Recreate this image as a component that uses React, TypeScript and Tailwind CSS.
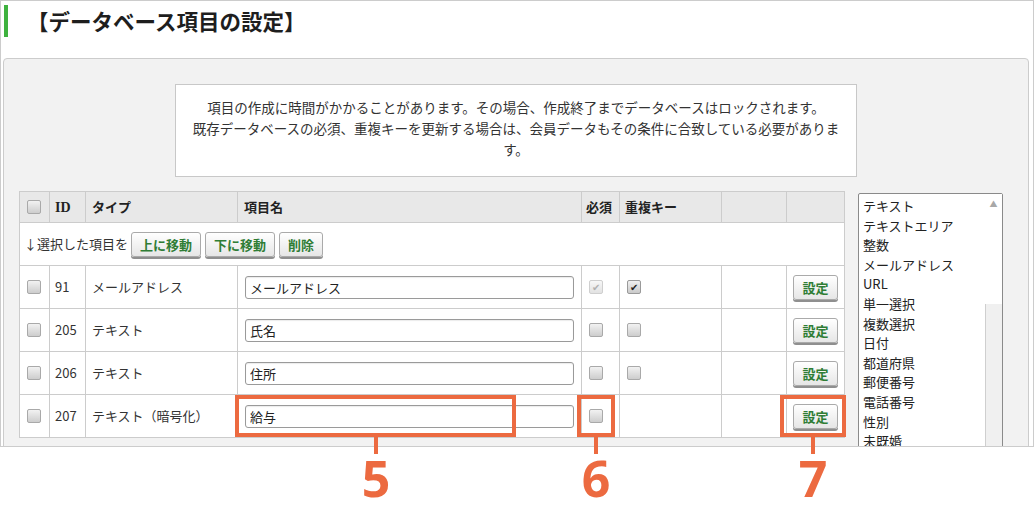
import React from "react";

const jp = { fontFamily: '"Noto Sans CJK JP", "Noto Sans", sans-serif' };

type Row = {
  id: number;
  type: string;
  name: string;
  required: "checked-disabled" | "off";
  unique: "checked" | "off" | "none";
};

const rows: Row[] = [
  { id: 91, type: "メールアドレス", name: "メールアドレス", required: "checked-disabled", unique: "checked" },
  { id: 205, type: "テキスト", name: "氏名", required: "off", unique: "off" },
  { id: 206, type: "テキスト", name: "住所", required: "off", unique: "off" },
  { id: 207, type: "テキスト（暗号化）", name: "給与", required: "off", unique: "none" },
];

const typeOptions = [
  "テキスト",
  "テキストエリア",
  "整数",
  "メールアドレス",
  "URL",
  "単一選択",
  "複数選択",
  "日付",
  "都道府県",
  "郵便番号",
  "電話番号",
  "性別",
  "未既婚",
];

function Check({ state = "off" }: { state?: "off" | "checked" | "checked-disabled" }) {
  if (state === "checked-disabled") {
    return (
      <span className="flex h-[14px] w-[14px] items-center justify-center rounded-[2px] border border-[#cfcfcf] bg-gradient-to-b from-[#f7f7f7] to-[#e2e2e2] text-[10px] leading-none text-[#b0b0b0]">
        ✔
      </span>
    );
  }
  if (state === "checked") {
    return (
      <span className="flex h-[14px] w-[14px] items-center justify-center rounded-[2px] border border-[#9a9a9a] bg-gradient-to-b from-[#f0f0f0] to-[#cacaca] text-[10px] leading-none text-[#222]">
        ✔
      </span>
    );
  }
  return (
    <span className="block h-[14px] w-[14px] rounded-[2px] border border-[#a9a9a9] bg-gradient-to-b from-[#f2f2f2] to-[#cdcdcd]" />
  );
}

function Btn({ children }: { children: React.ReactNode }) {
  return (
    <button
      type="button"
      className="h-[25px] rounded-[3px] border border-[#aaaaaa] bg-gradient-to-b from-white to-[#e6e6e6] px-[8px] text-[13px] font-bold leading-none text-[#2f7d35] shadow-[0_2px_0_#8f8f8f]"
    >
      {children}
    </button>
  );
}

export default function App() {
  return (
    <div className="relative h-[506px] w-[1034px] overflow-hidden bg-white text-[#333]" style={jp}>
      <div className="h-[447px] overflow-hidden border border-[#cccccc]">
        <div className="mt-[4px] flex items-center">
          <span className="ml-[3px] h-[32px] w-[4px] bg-[#3fb23f]" />
          <h1 className="ml-[19px] text-[21.5px] font-bold leading-none text-[#1e1e1e]">【データベース項目の設定】</h1>
        </div>

        <div className="ml-[2px] mr-[4px] mt-[21px] h-[600px] rounded-[4px] border border-[#cccccc] bg-[#f2f2f2] pt-[25px]">
          <div className="mx-auto w-[682px] border border-[#c8c8c8] bg-white px-[12px] pb-[16px] pt-[12px] text-center text-[13.5px] leading-[21px] text-[#333]">
            項目の作成に時間がかかることがあります。その場合、作成終了までデータベースはロックされます。
            <br />
            既存データベースの必須、重複キーを更新する場合は、会員データもその条件に合致している必要があります。
          </div>

          <div className="mt-[14px] flex items-start gap-[13px] pl-[15px]">
            <table className="w-[825px] table-fixed border-collapse bg-white text-[13px] text-[#333]">
              <colgroup>
                <col className="w-[30px]" />
                <col className="w-[36px]" />
                <col className="w-[152px]" />
                <col className="w-[344px]" />
                <col className="w-[38px]" />
                <col className="w-[102px]" />
                <col className="w-[65px]" />
                <col className="w-[58px]" />
              </colgroup>
              <thead>
                <tr className="h-[31px] bg-[#e8e8e8] text-left font-bold text-[#222]">
                  <th className="border border-[#cccccc] pl-[7px]">
                    <Check />
                  </th>
                  <th className="border border-[#cccccc] pl-[5px] text-[14px] font-bold" style={{ fontFamily: '"Liberation Serif", serif' }}>
                    ID
                  </th>
                  <th className="border border-[#cccccc] pl-[6px]">タイプ</th>
                  <th className="border border-[#cccccc] pl-[6px]">項目名</th>
                  <th className="border border-[#cccccc] pl-[4px]">必須</th>
                  <th className="border border-[#cccccc] pl-[5px]">重複キー</th>
                  <th className="border border-[#cccccc]" />
                  <th className="border border-[#cccccc]" />
                </tr>
              </thead>
              <tbody>
                <tr className="h-[43px]">
                  <td colSpan={8} className="border border-[#cccccc] pl-[4px]">
                    <div className="flex items-center gap-[4px]">
                      <span className="mr-[-1px]">↓選択した項目を</span>
                      <Btn>上に移動</Btn>
                      <Btn>下に移動</Btn>
                      <Btn>削除</Btn>
                    </div>
                  </td>
                </tr>
                {rows.map((r) => (
                  <tr key={r.id} className="h-[43px]">
                    <td className="border border-[#cccccc] pl-[7px]">
                      <Check />
                    </td>
                    <td className="border border-[#cccccc] pl-[5px]">{r.id}</td>
                    <td className="border border-[#cccccc] pl-[6px]">{r.type}</td>
                    <td className="border border-[#cccccc] px-[7px]">
                      <input
                        readOnly
                        value={r.name}
                        className="h-[23px] w-full rounded-[3px] border border-[#9a9a9a] bg-white px-[4px] text-[13px] text-[#222] shadow-[inset_0_1px_1px_rgba(0,0,0,0.08)] outline-none"
                        style={jp}
                      />
                    </td>
                    <td className="border border-[#cccccc] pl-[7px]">
                      <Check state={r.required} />
                    </td>
                    <td className="border border-[#cccccc] pl-[7px]">
                      {r.unique !== "none" && <Check state={r.unique} />}
                    </td>
                    <td className="border border-[#cccccc]" />
                    <td className="border border-[#cccccc] text-center">
                      <Btn>設定</Btn>
                    </td>
                  </tr>
                ))}
              </tbody>
            </table>

            <div className="mt-[2px] flex h-[300px] w-[145px] rounded-[2px] border border-[#8a8a8a] bg-white">
              <ul className="flex-1 pl-[4px] pt-[2px] text-[13px] leading-[19.6px] text-[#222]">
                {typeOptions.map((o) => (
                  <li key={o}>{o}</li>
                ))}
              </ul>
              <div className="flex w-[17px] flex-col">
                <div className="flex h-[110px] justify-center bg-white pt-[6px] text-[8px] leading-none text-[#a8a8a8]">▲</div>
                <div className="flex-1 border-l border-[#cfcfcf] bg-[#f0f0f0]" />
              </div>
            </div>
          </div>
        </div>
      </div>

      {/* callouts */}
      <div className="absolute left-[235px] top-[395px] h-[42px] w-[281px] border-4 border-[#ec6a40]" />
      <div className="absolute left-[374px] top-[436px] h-[18px] w-[4px] bg-[#ec6a40]" />
      <div className="absolute left-[346px] top-[453px] w-[60px] text-center text-[50px] font-bold leading-[50px] text-[#ec6a40]" style={{ fontFamily: '"Noto Sans", sans-serif' }}>
        5
      </div>

      <div className="absolute left-[577px] top-[395px] h-[42px] w-[38px] border-4 border-[#ec6a40]" />
      <div className="absolute left-[594px] top-[436px] h-[18px] w-[4px] bg-[#ec6a40]" />
      <div className="absolute left-[566px] top-[453px] w-[60px] text-center text-[50px] font-bold leading-[50px] text-[#ec6a40]" style={{ fontFamily: '"Noto Sans", sans-serif' }}>
        6
      </div>

      <div className="absolute left-[780px] top-[395px] h-[42px] w-[66px] border-4 border-[#ec6a40]" />
      <div className="absolute left-[811px] top-[436px] h-[18px] w-[4px] bg-[#ec6a40]" />
      <div className="absolute left-[783px] top-[453px] w-[60px] text-center text-[50px] font-bold leading-[50px] text-[#ec6a40]" style={{ fontFamily: '"Noto Sans", sans-serif' }}>
        7
      </div>
    </div>
  );
}
